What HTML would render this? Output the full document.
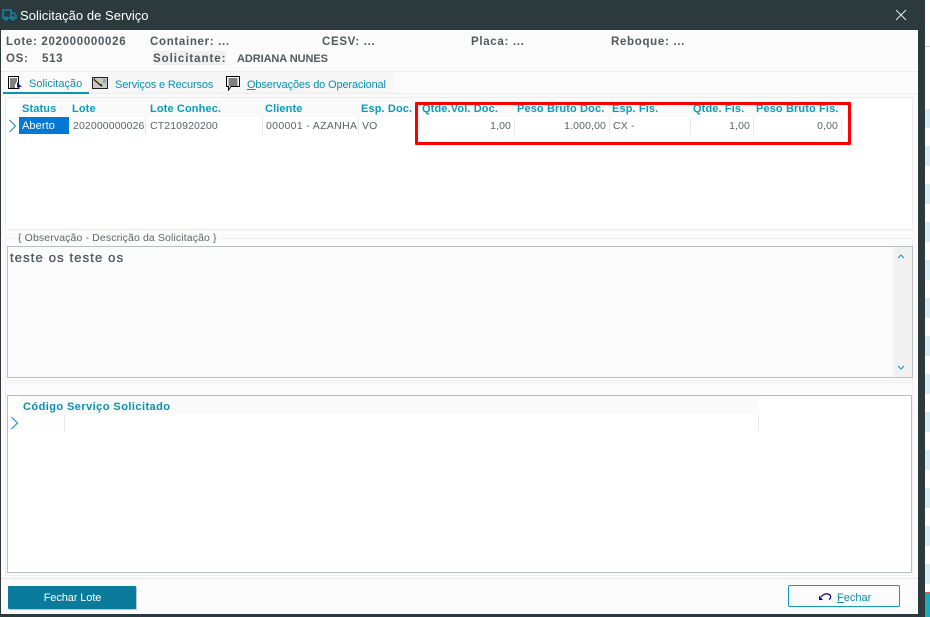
<!DOCTYPE html>
<html lang="pt"><head><meta charset="utf-8"><title>Solicitação de Serviço</title>
<style>
html,body{margin:0;padding:0}
body{width:930px;height:617px;position:relative;overflow:hidden;background:#fff;font-family:"Liberation Sans",sans-serif;font-size:11px;color:#555f63}
.a,.t{position:absolute}
.t{white-space:nowrap;line-height:14px}
.b{font-weight:bold;color:#4f5a5e;font-size:11.5px;letter-spacing:.68px}
.h{font-weight:bold;color:#0a9cbc;font-size:11px;letter-spacing:.12px}
.h2{font-weight:bold;color:#0a8fb0;font-size:11px;letter-spacing:.45px}
.c{color:#5a6366;font-size:10.5px;letter-spacing:.12px}
.r{text-align:right}
.tab{color:#0a8fb0;font-size:11px;letter-spacing:-.14px}
.sep{position:absolute;width:1px;background:#e8e8e8}
</style></head><body>
<div class="a" style="left:925px;top:0;width:5px;height:617px;background:#fff"></div>
<div class="a" style="left:925px;top:46px;width:5px;height:1px;background:#ccc"></div>
<div class="a" style="left:925px;top:109px;width:5px;height:19px;background:#d9ecf3"></div>
<div class="a" style="left:925px;top:146px;width:5px;height:20px;background:#d9ecf3"></div>
<div class="a" style="left:925px;top:184px;width:5px;height:20px;background:#d9ecf3"></div>
<div class="a" style="left:925px;top:222px;width:5px;height:20px;background:#d9ecf3"></div>
<div class="a" style="left:925px;top:260px;width:5px;height:20px;background:#d9ecf3"></div>
<div class="a" style="left:925px;top:298px;width:5px;height:20px;background:#d9ecf3"></div>
<div class="a" style="left:925px;top:336px;width:5px;height:20px;background:#d9ecf3"></div>
<div class="a" style="left:925px;top:374px;width:5px;height:20px;background:#d9ecf3"></div>
<div class="a" style="left:925px;top:412px;width:5px;height:20px;background:#d9ecf3"></div>
<div class="a" style="left:925px;top:450px;width:5px;height:20px;background:#d9ecf3"></div>
<div class="a" style="left:925px;top:488px;width:5px;height:20px;background:#d9ecf3"></div>
<div class="a" style="left:925px;top:526px;width:5px;height:20px;background:#d9ecf3"></div>
<div class="a" style="left:925px;top:564px;width:5px;height:20px;background:#d9ecf3"></div>
<div class="a" style="left:925px;top:592px;width:5px;height:1px;background:#e0584f"></div>
<div class="a" style="left:925px;top:593px;width:5px;height:24px;background:#1fa9bb"></div>

<!-- dialog frame -->
<div class="a" style="left:0;top:0;width:925px;height:617px;background:#2d3a3d"></div>
<div class="a" style="left:1px;top:30px;width:917px;height:584px;background:#fbfbfb"></div>

<!-- title -->
<svg class="a" style="left:2px;top:9px" width="15" height="12" viewBox="0 0 15 12" fill="none" stroke="#1186ab" stroke-width="1.5"><path d="M1 1h8v8H1zM9 4h3l2 2.5V9H9z"/><circle cx="4" cy="9.5" r="1.4" fill="#2d3a3d"/><circle cx="11" cy="9.5" r="1.4" fill="#2d3a3d"/></svg>
<div class="t" style="left:20px;top:8px;color:#fff;font-size:13px;line-height:15px;letter-spacing:.03px">Solicitação de Serviço</div>
<svg class="a" style="left:895px;top:9px" width="12" height="12" viewBox="0 0 12 12" stroke="#e8eaea" stroke-width="1"><path d="M1 1l10 10M11 1L1 11"/></svg>

<!-- header info -->
<div class="t b" style="left:6px;top:35px">Lote: 202000000026</div>
<div class="t b" style="left:150px;top:35px">Container: ...</div>
<div class="t b" style="left:322px;top:35px">CESV: ...</div>
<div class="t b" style="left:471px;top:35px">Placa: ...</div>
<div class="t b" style="left:611px;top:35px">Reboque: ...</div>
<div class="t b" style="left:6px;top:52px">OS:</div>
<div class="t b" style="left:42px;top:52px">513</div>
<div class="a" style="left:153px;top:51px;width:73px;height:14px;background:#f0f0f0"></div>
<div class="t b" style="left:153px;top:52px;letter-spacing:.95px">Solicitante:</div>
<div class="t b" style="left:237px;top:52px;letter-spacing:-.08px;font-size:11px">ADRIANA NUNES</div>
<div class="a" style="left:1px;top:71px;width:917px;height:1px;background:#ececec"></div>

<!-- tabs -->
<div class="a" style="left:89px;top:72px;width:304px;height:21px;background:#f6f6f6"></div>
<div class="a" style="left:3px;top:93px;width:915px;height:1px;background:#ececec"></div>
<div class="a" style="left:3px;top:92px;width:86px;height:2px;background:#0f93ad"></div>
<svg class="a" style="left:8px;top:76px" width="15" height="14" viewBox="0 0 15 14" fill="none"><path d="M.5.5h10v12H.5z" fill="#fff" stroke="#000"/><path d="M2 3h7M2 5h7M2 7h6M2 9h5M2 11h5" stroke="#000"/><path d="M9 6l5 5-2.500 0 0 2.500-2.500-2.500z" fill="#1a1a8c"/></svg>
<div class="t tab" style="left:29px;top:77px;letter-spacing:0">Solicitação</div>
<svg class="a" style="left:92px;top:77px" width="16" height="12" viewBox="0 0 16 12"><rect x=".5" y=".5" width="15" height="11" fill="#c8c8c8" stroke="#222"/><path d="M2 2l8 7" stroke="#222" stroke-width="2"/><path d="M3 2l6 5" stroke="#e6d24a"/><rect x="11" y="2" width="3" height="4" fill="#8aa"/></svg>
<div class="t tab" style="left:115px;top:78px">Serviços e Recursos</div>
<svg class="a" style="left:226px;top:76px" width="14" height="15" viewBox="0 0 14 15" fill="none"><path d="M.5.5h13v10H5L2.500 14v-3.500H.5z" fill="#fff" stroke="#000"/><path d="M2.500 3h9M2.500 5h9M2.500 7h9M2.500 9h9" stroke="#000"/></svg>
<div class="t tab" style="left:247px;top:78px"><u>O</u>bservações do Operacional</div>

<!-- grid 1 -->
<div class="a" style="left:5px;top:97px;width:908px;height:133px;box-sizing:border-box;background:#fff;border:1px solid #ececec"></div>
<div class="a" style="left:19px;top:98px;width:820px;height:19px;background:#fafafa"></div>
<div class="t h" style="left:22px;top:102px">Status</div>
<div class="t h" style="left:72px;top:102px">Lote</div>
<div class="t h" style="left:150px;top:102px">Lote Conhec.</div>
<div class="t h" style="left:265px;top:102px">Cliente</div>
<div class="t h" style="left:361px;top:102px">Esp. Doc.</div>
<div class="t h" style="left:422px;top:102px">Qtde.Vol. Doc.</div>
<div class="t h" style="left:517px;top:102px">Peso Bruto Doc.</div>
<div class="t h" style="left:612px;top:102px">Esp. Fis.</div>
<div class="t h" style="left:693px;top:102px">Qtde. Fis.</div>
<div class="t h" style="left:756px;top:102px">Peso Bruto Fis.</div>
<svg class="a" style="left:8px;top:119px" width="9" height="14" viewBox="0 0 9 14" fill="none" stroke="#1186d0"><path d="M1.500 1l6 6-6 6"/></svg>
<div class="a" style="left:19px;top:117px;width:50px;height:17px;background:#0378d4"></div>
<div class="t" style="left:22px;top:119px;color:#fff;font-size:11px;letter-spacing:.1px">Aberto</div>
<div class="t c" style="left:73px;top:119px">202000000026</div>
<div class="t c" style="left:150px;top:119px">CT210920200</div>
<div class="t c" style="left:266px;top:119px;width:91px;overflow:hidden;letter-spacing:.33px">000001 - AZANHA</div>
<div class="t c" style="left:362px;top:119px">VO</div>
<div class="t c r" style="left:420px;top:119px;width:91px">1,00</div>
<div class="t c r" style="left:516px;top:119px;width:90px">1.000,00</div>
<div class="t c" style="left:613px;top:119px">CX -</div>
<div class="t c r" style="left:692px;top:119px;width:58px">1,00</div>
<div class="t c r" style="left:756px;top:119px;width:82px">0,00</div>
<div class="sep" style="left:145px;top:118px;height:16px"></div>
<div class="sep" style="left:262px;top:118px;height:16px"></div>
<div class="sep" style="left:358px;top:118px;height:16px"></div>
<div class="sep" style="left:419px;top:118px;height:16px"></div>
<div class="sep" style="left:514px;top:118px;height:16px"></div>
<div class="sep" style="left:609px;top:118px;height:16px"></div>
<div class="sep" style="left:690px;top:118px;height:16px"></div>
<div class="sep" style="left:753px;top:118px;height:16px"></div>
<div class="sep" style="left:841px;top:118px;height:16px"></div>
<!-- red box -->
<div class="a" style="left:415px;top:102px;width:436px;height:43px;box-sizing:border-box;border:3px solid #f00;border-radius:1px"></div>

<!-- observation -->
<div class="a" style="left:5px;top:238px;width:908px;height:143px;border:1px solid #efefef;box-sizing:border-box"></div>
<div class="a" style="left:15px;top:230px;width:206px;height:16px;background:#fbfbfb"></div>
<div class="t" style="left:18px;top:231px;font-size:10.5px;color:#5d6568;letter-spacing:.12px">{ Observação - Descrição da Solicitação }</div>
<div class="a" style="left:7px;top:246px;width:906px;height:132px;box-sizing:border-box;border:1px solid #b9bfbf;background:#fbfbfb"></div>
<div class="a" style="left:893px;top:247px;width:19px;height:130px;background:#f1f1f1"></div>
<svg class="a" style="left:897px;top:254px" width="8" height="5" viewBox="0 0 8 5" fill="none" stroke="#0a9cbc"><path d="M1 4l3-3 3 3"/></svg>
<svg class="a" style="left:897px;top:365px" width="8" height="5" viewBox="0 0 8 5" fill="none" stroke="#0a9cbc"><path d="M1 1l3 3 3-3"/></svg>
<div class="t" style="left:10px;top:250px;font-size:13px;line-height:15px;color:#4f5b5f;letter-spacing:1.15px;-webkit-text-stroke:.35px #4f5b5f">teste os teste os</div>

<!-- grid 2 -->
<div class="a" style="left:5px;top:382px;width:908px;height:194px;box-sizing:border-box;border:1px solid #efefef"></div>
<div class="a" style="left:7px;top:395px;width:905px;height:178px;box-sizing:border-box;border:1px solid #b9bfbf;background:#fff"></div>
<div class="a" style="left:21px;top:396px;width:738px;height:18px;background:#fafafa"></div>
<div class="t h2" style="left:23px;top:400px">Código</div>
<div class="t h2" style="left:67px;top:400px">Serviço Solicitado</div>
<div class="a" style="left:21px;top:414px;width:43px;height:17px;background:#fdfdfd"></div>
<div class="sep" style="left:64px;top:415px;height:16px"></div>
<div class="sep" style="left:758px;top:415px;height:16px"></div>
<svg class="a" style="left:10px;top:416px" width="9" height="14" viewBox="0 0 9 14" fill="none" stroke="#1186d0"><path d="M1.500 1l6 6-6 6"/></svg>

<!-- footer -->
<div class="a" style="left:1px;top:578px;width:917px;height:1px;background:#e6e6e6"></div>
<div class="a" style="left:8px;top:586px;width:128px;height:23px;background:#0a7b9b;border-radius:1px;box-shadow:1px 1px 0 #b8c6cb"></div>
<div class="t" style="left:8px;top:591px;width:129px;text-align:center;color:#fff;font-size:11px;letter-spacing:-.1px">Fechar Lote</div>
<div class="a" style="left:788px;top:585px;width:112px;height:22px;box-sizing:border-box;border:1px solid #0f9bbd;border-radius:2px;background:#fbfbfb"></div>
<svg class="a" style="left:818px;top:592px" width="14" height="10" viewBox="0 0 14 10" fill="none"><path d="M1 8V3.500l4 4.500z" fill="#0b0b78"/><path d="M3 5c3-4 8-4 9.500-1 .6 1.500-.5 3-1.500 3.500" stroke="#0b0b78" stroke-width="1.300"/></svg>
<div class="t" style="left:837px;top:591px;color:#0a8fb0;font-size:11px"><u>F</u>echar</div>
</body></html>
